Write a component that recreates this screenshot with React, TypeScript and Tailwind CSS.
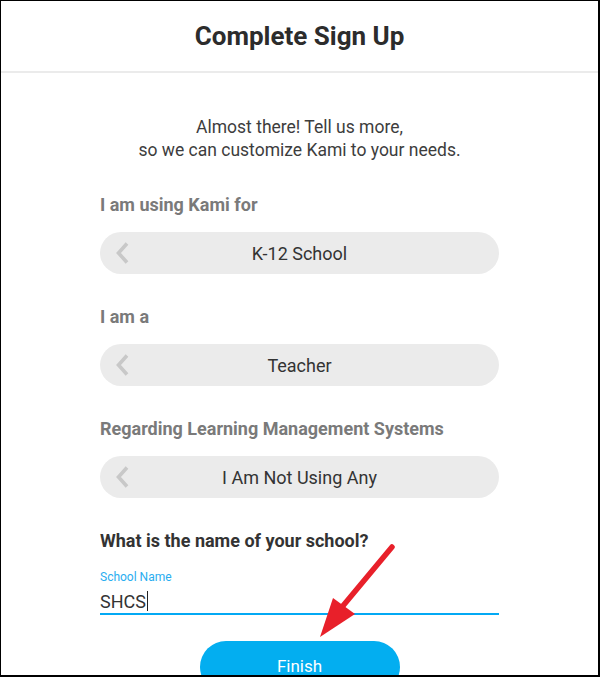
import React from "react";

function Chevron() {
  return (
    <svg width="14" height="22" viewBox="0 0 14 22" className="absolute left-[15px] top-[10px]">
      <polyline points="12,1.5 3.5,11 12,20.5" fill="none" stroke="#c8c8c8" strokeWidth="3.6" strokeLinecap="butt" strokeLinejoin="miter" />
    </svg>
  );
}

function Pill({ text }: { text: string }) {
  return (
    <div className="relative mt-[17px] flex h-[42px] items-center justify-center rounded-full bg-[#ebebeb] text-[18px] text-[#333333]">
      <Chevron />
      <span>{text}</span>
    </div>
  );
}

function Label({ text, dark }: { text: string; dark?: boolean }) {
  return (
    <div
      className={
        "text-[18px] font-bold leading-[21px] " + (dark ? "text-[#333333]" : "text-[#7a7a7a]")
      }
    >
      {text}
    </div>
  );
}

export default function App() {
  return (
    <div
      className="relative h-[677px] w-[600px] overflow-hidden border-l border-t border-r-2 border-b-2 border-black bg-white"
      style={{ fontFamily: "Roboto, 'Noto Sans', sans-serif" }}
    >
      <div className="flex h-[72px] items-center justify-center border-b-2 border-[#ebebeb]">
        <h1 className="text-[26px] font-bold text-[#2c2c2c]">Complete Sign Up</h1>
      </div>
      <div className="px-[99px]">
        <p className="mt-[43px] text-center text-[17.5px] leading-[23px] text-[#3d3d3d]">
          Almost there! Tell us more,
          <br />
          so we can customize Kami to your needs.
        </p>
        <div className="mt-[32px]">
          <Label text="I am using Kami for" />
          <Pill text="K-12 School" />
        </div>
        <div className="mt-[32px]">
          <Label text="I am a" />
          <Pill text="Teacher" />
        </div>
        <div className="mt-[32px]">
          <Label text="Regarding Learning Management Systems" />
          <Pill text="I Am Not Using Any" />
        </div>
        <div className="mt-[32px]">
          <Label text="What is the name of your school?" dark />
        </div>
        <div className="mt-[19px] text-[12px] leading-[14px] text-[#29adf0]">School Name</div>
        <div className="mt-[5px] flex h-[26px] items-center border-b-2 border-[#03a9f4] text-[18px] text-[#333333]">
          <span>SHCS</span>
          <span className="ml-[1px] inline-block h-[20px] w-px bg-[#222]" />
        </div>
        <div className="mt-[26px] flex justify-center">
          <button className="h-[52px] w-[200px] rounded-full bg-[#03aef0] text-[17px] text-white">
            Finish
          </button>
        </div>
      </div>
      <svg className="pointer-events-none absolute left-0 top-0" width="600" height="677">
        <line x1="391" y1="546" x2="336" y2="612" stroke="#e8202a" strokeWidth="5.5" strokeLinecap="round" />
        <polygon points="319,636 332,597 354,613" fill="#e8202a" />
      </svg>
    </div>
  );
}
